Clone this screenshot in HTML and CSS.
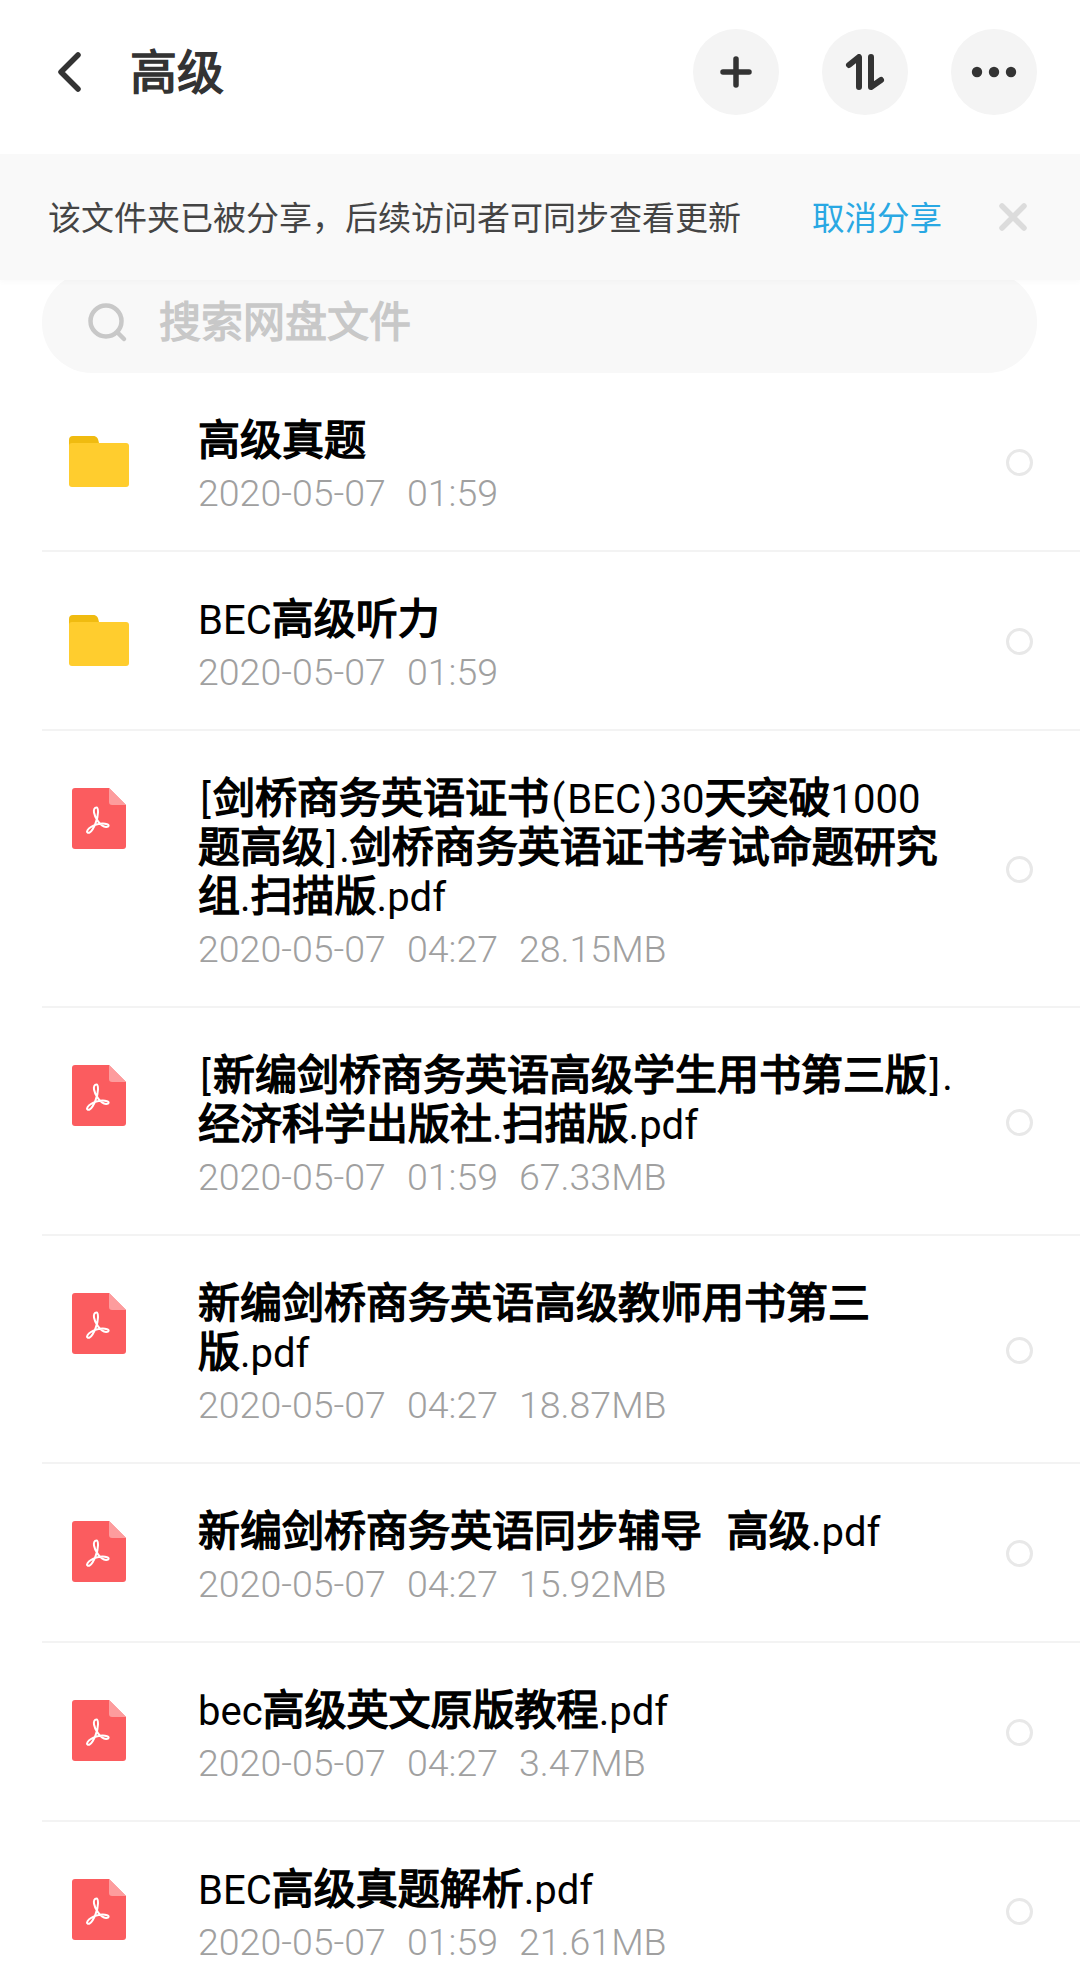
FILE: index.html
```html
<!DOCTYPE html>
<html lang="zh-CN">
<head>
<meta charset="utf-8">
<title>高级</title>
<link rel="stylesheet" href="styles.css">
</head>
<body>
<svg class="defs" width="0" height="0" aria-hidden="true">
  <symbol id="folder" viewBox="0 0 60 52">
    <path d="M0 5a4 4 0 0 1 4-4h20c4 0 5 2 6 7H6v6H0z" fill="#f0bb10"/>
    <path d="M0 11a3 3 0 0 1 3-3h54a3 3 0 0 1 3 3v38a3 3 0 0 1-3 3H3a3 3 0 0 1-3-3z" fill="#ffcd2e"/>
  </symbol>
  <symbol id="pdf" viewBox="0 0 54 61">
    <path d="M3 0h34l17 17v41a3 3 0 0 1-3 3H3a3 3 0 0 1-3-3V3a3 3 0 0 1 3-3z" fill="#fb5c5f"/>
    <path d="M37 0l17 17H40a3 3 0 0 1-3-3z" fill="#fd9c9d"/>
    <path d="M24.500 19.500c-2 0-3 2-2.500 5 .8 5 6 14 12 14.500 3 .2 3.500-2 1-2.800-6-1.800-16 1-19.500 6-1.300 2 .5 3.500 2.500 2 4-3 8-14 8-20 0-2.500-.5-4.700-1.500-4.700z" fill="none" stroke="#fff" stroke-width="2" stroke-linejoin="round"/>
  </symbol>
</svg>

<header class="topbar">
  <svg class="back" viewBox="0 0 26 42" aria-hidden="true"><path d="M22 4L5 21l17 17" fill="none" stroke="#333" stroke-width="5.5" stroke-linecap="round" stroke-linejoin="round"/></svg>
  <h1 class="page-title">高级</h1>
  <div class="actions">
    <button class="round-btn" aria-label="新建"><svg viewBox="0 0 32 32" aria-hidden="true"><path d="M16 3v26M3 16h26" fill="none" stroke="#333" stroke-width="5.5" stroke-linecap="round"/></svg></button>
    <button class="round-btn" aria-label="排序"><svg viewBox="0 0 40 36" aria-hidden="true"><path d="M4 11L14 3v30M26 3v30l10-7" fill="none" stroke="#333" stroke-width="6" stroke-linecap="round" stroke-linejoin="round"/></svg></button>
    <button class="round-btn" aria-label="更多"><svg viewBox="0 0 46 12" aria-hidden="true"><circle cx="6" cy="6" r="5.2" fill="#333"/><circle cx="23" cy="6" r="5.2" fill="#333"/><circle cx="40" cy="6" r="5.2" fill="#333"/></svg></button>
  </div>
</header>

<section class="notice">
  <span class="notice-text">该文件夹已被分享，后续访问者可同步查看更新</span>
  <a class="notice-link">取消分享</a>
  <svg class="notice-close" viewBox="0 0 28 28" aria-hidden="true"><path d="M3 3l22 22M25 3L3 25" fill="none" stroke="#dcdcdc" stroke-width="5.5" stroke-linecap="round"/></svg>
</section>

<div class="search">
  <svg class="search-icon" viewBox="0 0 40 40" aria-hidden="true"><circle cx="18" cy="18" r="15.5" fill="none" stroke="#c8c8c8" stroke-width="4.5"/><path d="M30 30l6 6" stroke="#c8c8c8" stroke-width="4.5" stroke-linecap="round"/></svg>
  <span class="search-text">搜索网盘文件</span>
</div>

<ul class="list">
  <li class="row">
    <svg class="icon-folder"><use href="#folder"/></svg>
    <div class="info">
      <div class="name"><b>高级真题</b></div>
      <div class="meta"><span>2020-05-07</span><span>01:59</span></div>
    </div>
    <span class="radio"></span>
  </li>
  <li class="row">
    <svg class="icon-folder"><use href="#folder"/></svg>
    <div class="info">
      <div class="name">BEC<b>高级听力</b></div>
      <div class="meta"><span>2020-05-07</span><span>01:59</span></div>
    </div>
    <span class="radio"></span>
  </li>
  <li class="row">
    <svg class="icon-pdf"><use href="#pdf"/></svg>
    <div class="info">
      <div class="name"><span class="pn">[</span><b>剑桥商务英语证书</b><span class="pn">(</span>BEC<span class="pn">)</span>30<b>天突破</b>1000<br><b>题高级</b><span class="pn">]</span>.<b>剑桥商务英语证书考试命题研究</b><br><b>组</b>.<b>扫描版</b>.pdf</div>
      <div class="meta"><span>2020-05-07</span><span>04:27</span><span>28.15MB</span></div>
    </div>
    <span class="radio"></span>
  </li>
  <li class="row">
    <svg class="icon-pdf"><use href="#pdf"/></svg>
    <div class="info">
      <div class="name"><span class="pn">[</span><b>新编剑桥商务英语高级学生用书第三版</b><span class="pn">]</span>.<br><b>经济科学出版社</b>.<b>扫描版</b>.pdf</div>
      <div class="meta"><span>2020-05-07</span><span>01:59</span><span>67.33MB</span></div>
    </div>
    <span class="radio"></span>
  </li>
  <li class="row">
    <svg class="icon-pdf"><use href="#pdf"/></svg>
    <div class="info">
      <div class="name"><b>新编剑桥商务英语高级教师用书第三</b><br><b>版</b>.pdf</div>
      <div class="meta"><span>2020-05-07</span><span>04:27</span><span>18.87MB</span></div>
    </div>
    <span class="radio"></span>
  </li>
  <li class="row">
    <svg class="icon-pdf"><use href="#pdf"/></svg>
    <div class="info">
      <div class="name"><b>新编剑桥商务英语同步辅导</b>&nbsp;&nbsp;<b class="spaced">高级</b>.pdf</div>
      <div class="meta"><span>2020-05-07</span><span>04:27</span><span>15.92MB</span></div>
    </div>
    <span class="radio"></span>
  </li>
  <li class="row">
    <svg class="icon-pdf"><use href="#pdf"/></svg>
    <div class="info">
      <div class="name">bec<b>高级英文原版教程</b>.pdf</div>
      <div class="meta"><span>2020-05-07</span><span>04:27</span><span>3.47MB</span></div>
    </div>
    <span class="radio"></span>
  </li>
  <li class="row">
    <svg class="icon-pdf"><use href="#pdf"/></svg>
    <div class="info">
      <div class="name">BEC<b>高级真题解析</b>.pdf</div>
      <div class="meta"><span>2020-05-07</span><span>01:59</span><span>21.61MB</span></div>
    </div>
    <span class="radio"></span>
  </li>
</ul>
</body>
</html>
```
FILE: styles.css
```css
* { box-sizing: border-box; }
html, body { margin: 0; padding: 0; }
body {
  width: 1080px;
  height: 1978px;
  overflow: hidden;
  background: #fff;
  font-family: Roboto, "Noto Sans CJK SC", sans-serif;
  color: #000;
}
.defs { display: block; height: 0; }

.topbar {
  height: 154px;
  display: flex;
  align-items: center;
  padding: 0 43px 10px 56px;
}
.back { width: 26px; height: 42px; margin-right: 48px; }
.page-title {
  margin: 2px 0 0;
  font-size: 47px;
  line-height: 60px;
  font-weight: 400;
  -webkit-text-stroke: 1.5px #333;
  color: #333;
}
.actions { margin-left: auto; display: flex; gap: 43px; }
.round-btn {
  width: 86px;
  height: 86px;
  padding: 0;
  border: 0;
  border-radius: 50%;
  background: #f4f4f4;
  display: flex;
  align-items: center;
  justify-content: center;
}
.round-btn svg { width: 32px; height: 32px; }
.round-btn:nth-child(2) svg { width: 40px; height: 36px; }
.round-btn:nth-child(3) svg { width: 46px; height: 12px; }

.notice {
  position: relative;
  z-index: 1;
  height: 126px;
  display: flex;
  align-items: center;
  padding: 0 53px 0 48px;
  background: #f9f9f9;
  box-shadow: 0 3px 5px rgba(0, 0, 0, .02);
}
.notice-text { margin-top: 3px; font-size: 33px; line-height: 44px; color: #444; white-space: nowrap; }
.notice-link { margin: 3px 0 0 71px; font-size: 32.5px; line-height: 44px; color: #29a8e3; white-space: nowrap; }
.notice-close { width: 28px; height: 28px; margin-left: auto; }

.search {
  height: 101px;
  margin: -8px 43px 0 42px;
  padding: 0 0 0 46px;
  border-radius: 50px;
  background: #f8f8f8;
  display: flex;
  align-items: center;
}
.search-icon { width: 40px; height: 40px; margin-right: 31px; }
.search-text { font-size: 42px; line-height: 50px; font-weight: 400; -webkit-text-stroke: 1.3px #c8c8c8; color: #c8c8c8; }

.list { list-style: none; margin: 0; padding: 0 0 0 42px; }
.row {
  display: flex;
  align-items: flex-start;
  padding: 44px 0 34px;
  border-bottom: 2px solid #f3f3f3;
}
.icon-folder { width: 60px; height: 52px; margin: 18px 0 0 27px; flex: none; }
.icon-pdf { width: 54px; height: 61px; margin: 13px 0 0 30px; flex: none; }
.info { margin-left: 69px; flex: 1; }
.icon-pdf + .info { margin-left: 72px; }
.name { font-size: 40px; line-height: 49px; font-weight: 400; color: #000; white-space: nowrap; }
.name b { font-weight: 400; font-size: 42px; line-height: 1; -webkit-text-stroke: 1.5px #000; }
.name .spaced { margin-left: 5px; }
.pn { padding: 0 2.25px; }
.meta {
  display: flex;
  gap: 21px;
  margin-top: 5px;
  font-size: 37.5px;
  line-height: 45px;
  font-weight: 300;
  color: #a0a0a0;
}
.radio {
  align-self: center;
  flex: none;
  width: 27px;
  height: 27px;
  margin-right: 47px;
  margin-top: -8px;
  border: 3px solid #e8e8e8;
  border-radius: 50%;
}
```
